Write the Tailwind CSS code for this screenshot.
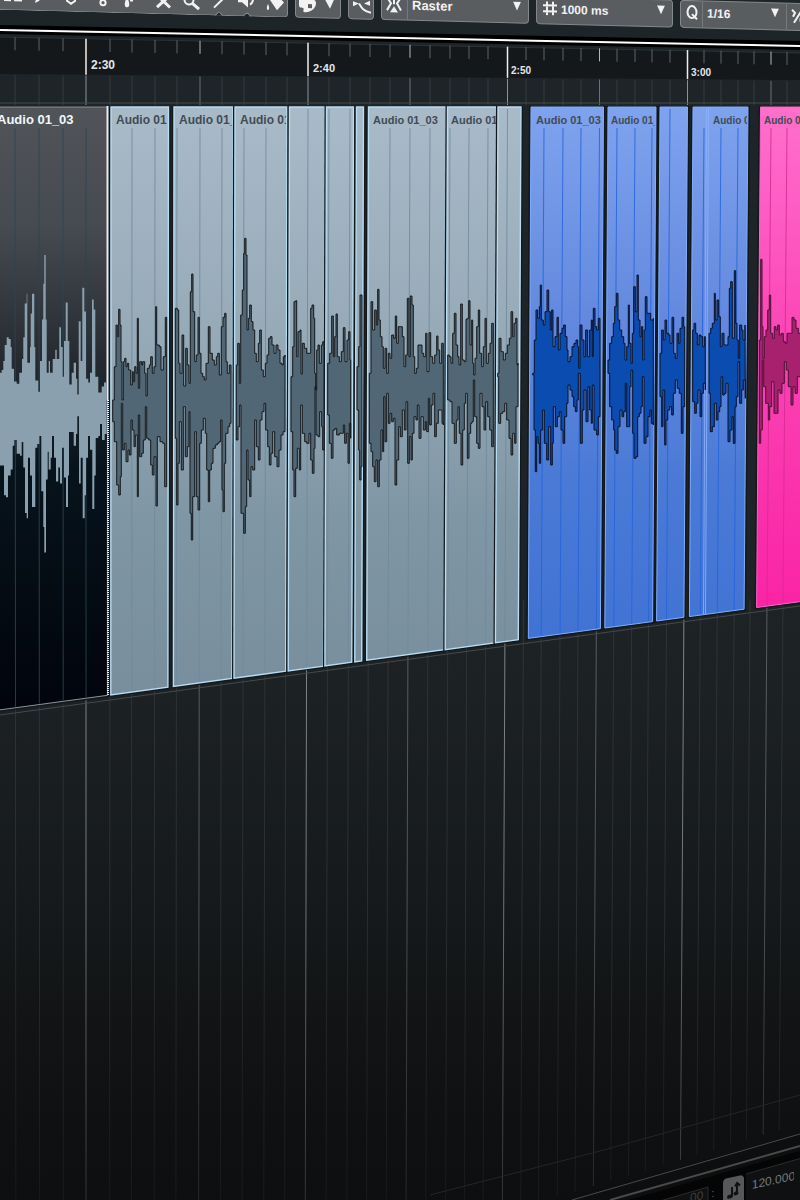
<!DOCTYPE html>
<html lang="en">
<head>
<meta charset="utf-8">
<meta name="viewport" content="width=device-width, initial-scale=1">
<title>Audio arrangement</title>
<script src="https://cdn.jsdelivr.net/npm/@tailwindcss/browser@4"></script>
</head>
<body class="bg-[#101112] font-['Liberation_Sans',Arial,sans-serif]">
<div class="relative overflow-hidden bg-[#1e2529]">

  <!-- Toolbar -->
  <header class="relative z-10 flex h-6 origin-top-left skew-y-[1.5deg] gap-[7px] font-bold text-[#f2f2f2]">
    <div class="relative -mt-[18px] flex h-7 w-[288px] shrink-0 rounded-br-sm border border-l-0 border-[#85888b] bg-[#5a5d60]">
      <button type="button" aria-label="Select" class="w-7"><svg class="h-7 w-7" viewBox="0 0 28 28"><path fill="#f2f2f2" d="M4 16h7v2H4zM14 16h8v2h-8z"/></svg></button>
      <button type="button" aria-label="Draw" class="w-7"><svg class="h-7 w-7" viewBox="0 0 28 28"><path fill="#f2f2f2" d="M9 11l6 0-4 6-4 2z"/></svg></button>
      <button type="button" aria-label="Erase" class="w-7"><svg class="h-7 w-7" viewBox="0 0 28 28"><path fill="none" stroke="#f2f2f2" stroke-width="2" d="M11 12v4l4 3 4-3v-4"/></svg></button>
      <button type="button" aria-label="Glue" class="w-7"><svg class="h-7 w-7" viewBox="0 0 28 28"><circle cx="19" cy="17" r="2.6" fill="none" stroke="#f2f2f2" stroke-width="2"/><path stroke="#f2f2f2" stroke-width="2" d="M19 8v6"/></svg></button>
      <button type="button" aria-label="Split" class="w-7"><svg class="h-7 w-7" viewBox="0 0 28 28"><path fill="#f2f2f2" d="M15 11c3 5 3 10 0 10s-3-5 0-10zM18 12h3v3h-3z"/></svg></button>
      <button type="button" aria-label="Mute" class="w-7"><svg class="h-7 w-7 overflow-visible" viewBox="0 0 28 28"><path stroke="#f2f2f2" stroke-width="3" d="M17 8l13 12M30 8L17 20"/></svg></button>
      <button type="button" aria-label="Zoom" class="w-7"><svg class="h-7 w-7 overflow-visible" viewBox="0 0 28 28"><circle cx="21" cy="12" r="4.5" fill="none" stroke="#f2f2f2" stroke-width="2"/><path stroke="#f2f2f2" stroke-width="3" d="M24 15l7 6"/></svg></button>
      <button type="button" aria-label="Line" class="w-7"><svg class="h-7 w-7 overflow-visible" viewBox="0 0 28 28"><path stroke="#f2f2f2" stroke-width="2" d="M27 10l-9 9"/></svg></button>
      <button type="button" aria-label="Play" class="w-7"><svg class="h-7 w-7 overflow-visible" viewBox="0 0 28 28"><path fill="#f2f2f2" d="M14 9h4l6-4v13l-6-5h-4z"/><path fill="none" stroke="#f2f2f2" stroke-width="2" d="M26 15c2-1 3-3 3-6"/></svg></button>
      <button type="button" aria-label="Color" class="w-7"><svg class="h-7 w-7 overflow-visible" viewBox="0 0 28 28"><path fill="#f2f2f2" d="M18 10l11-1 3 3-7 8zM16 14c2 4 1 6 0 6s-2-2 0-6z"/></svg></button>
      <svg class="absolute bottom-[-1px] left-[213px] h-1 w-10" viewBox="0 0 40 4"><path fill="#1e2529" stroke="#85888b" stroke-width="1" d="M2 4l4-4 4 4M30 4l4-4 4 4"/></svg>
    </div>
    <button type="button" aria-label="Colour palette" class="-mt-[18px] h-7 w-[46px] shrink-0 rounded-sm border border-[#85888b] bg-[#5a5d60]">
      <svg class="h-7 w-11 overflow-visible" viewBox="0 0 44 28"><path fill="#f2f2f2" fill-rule="evenodd" d="M3 9c1-4 17-4 17 3 0 6-7 10-12 9-2-1 1-3-1-4-2 0-4 0-4-3zm9 4v4h4v-4zM29 8h9l-4 9z"/></svg>
    </button>
    <button type="button" aria-label="Auto-crossfade" class="-mt-[18px] h-7 w-[26px] shrink-0 rounded-sm border border-[#85888b] bg-[#5a5d60]">
      <svg class="h-7 w-6" viewBox="0 0 24 28"><path fill="none" stroke="#f2f2f2" stroke-width="2" d="M12 7l4-3M10 11c3 5 5 8 12 9"/><path fill="#f2f2f2" d="M4 9l6 2-6 3zM21 8v5l-6-2z"/></svg>
    </button>
    <div class="-mt-[18px] flex h-7 w-[148px] shrink-0 items-center rounded-sm border border-[#85888b] bg-[#5a5d60]">
      <button type="button" aria-label="Snap" class="h-full w-[26px] border-r border-[#777a7d]"><svg class="h-6 w-6" viewBox="0 0 24 24"><path fill="none" stroke="#f2f2f2" stroke-width="2" d="M5 3l4 6-4 7M19 3l-4 6 4 7"/><path fill="#f2f2f2" d="M12 12l4 6H8zM11 4h2v4h-2zM11 7h2v3h-2z"/></svg></button>
      <div class="relative -mt-1 min-w-0 grow">
        <select aria-label="Snap type" class="w-full appearance-none bg-transparent pl-1 text-[13px] leading-5"><option>Raster</option></select>
        <svg class="pointer-events-none absolute right-1.5 top-1.5 h-2.5 w-2.5" viewBox="0 0 10 10"><path fill="#f2f2f2" d="M1 0h8L5 9z"/></svg>
      </div>
    </div>
    <div class="-mt-[18px] flex h-7 w-[137px] shrink-0 items-center rounded-sm border border-[#85888b] bg-[#5a5d60]">
      <svg class="-mt-1 ml-1.5 h-3.5 w-3.5 shrink-0" viewBox="0 0 14 14"><path fill="none" stroke="#f2f2f2" stroke-width="2" d="M4 0v14M10 0v14M0 4h14M0 10h14"/></svg>
      <div class="relative -mt-1 min-w-0 grow">
        <select aria-label="Grid type" class="w-full appearance-none bg-transparent pl-1 text-xs leading-5"><option>1000 ms</option></select>
        <svg class="pointer-events-none absolute right-1.5 top-1.5 h-2.5 w-2.5" viewBox="0 0 10 10"><path fill="#f2f2f2" d="M1 0h8L5 9z"/></svg>
      </div>
    </div>
    <div class="-mt-[18px] flex h-7 min-w-[128px] grow items-center rounded-l-sm border border-[#85888b] bg-[#5a5d60]">
      <div class="flex h-full w-[22px] shrink-0 items-center justify-center border-r border-[#777a7d]">
        <svg class="-mt-1 h-4 w-3.5" viewBox="0 0 14 16"><ellipse cx="7" cy="8" rx="4.5" ry="6" fill="none" stroke="#f2f2f2" stroke-width="2"/><path stroke="#f2f2f2" stroke-width="2" d="M7 10l5 5"/></svg>
      </div>
      <div class="relative -mt-1 w-[83px] shrink-0">
        <select aria-label="Quantize preset" class="w-full appearance-none bg-transparent pl-1 text-xs leading-5"><option>1/16</option></select>
        <svg class="pointer-events-none absolute right-1.5 top-1.5 h-2.5 w-2.5" viewBox="0 0 10 10"><path fill="#f2f2f2" d="M1 0h8L5 9z"/></svg>
      </div>
      <button type="button" aria-label="Iterative quantize" class="h-full border-l border-[#777a7d]"><svg class="h-6 w-5" viewBox="0 0 20 24"><path fill="none" stroke="#f2f2f2" stroke-width="2" d="M5 5l3 3-2 4M7 18L15 5"/><circle cx="16" cy="15" r="2.5" fill="none" stroke="#f2f2f2" stroke-width="2"/></svg></button>
    </div>
  </header>

  <!-- Ruler, tracks and clips -->
  <svg id="stage" class="block h-auto w-full overflow-visible" viewBox="0 24 800 1176" role="img" aria-label="Timeline with audio clips">
    <defs>
      <linearGradient id="bg" x1="0" y1="0" x2="0" y2="1"><stop offset="0" stop-color="#1e2529"/><stop offset=".55" stop-color="#1d2225"/><stop offset=".8" stop-color="#16191b"/><stop offset="1" stop-color="#0f1011"/></linearGradient>
      <linearGradient id="dark" x1="0" y1="105" x2="0" y2="710" gradientUnits="userSpaceOnUse"><stop offset="0" stop-color="#515459"/><stop offset=".2" stop-color="#464b51"/><stop offset=".4" stop-color="#292d34"/><stop offset=".6" stop-color="#07131b"/><stop offset="1" stop-color="#01040c"/></linearGradient>
      <linearGradient id="grey" x1="0" y1="105" x2="0" y2="695" gradientUnits="userSpaceOnUse"><stop offset="0" stop-color="#a9bbc8"/><stop offset=".4" stop-color="#96a9b7"/><stop offset=".7" stop-color="#7f96a5"/><stop offset="1" stop-color="#788e9d"/></linearGradient>
      <linearGradient id="blue" x1="0" y1="105" x2="0" y2="640" gradientUnits="userSpaceOnUse"><stop offset="0" stop-color="#7fa3ee"/><stop offset=".4" stop-color="#6389de"/><stop offset=".7" stop-color="#4a7ad6"/><stop offset="1" stop-color="#4173d4"/></linearGradient>
      <linearGradient id="pink" x1="0" y1="105" x2="0" y2="608" gradientUnits="userSpaceOnUse"><stop offset="0" stop-color="#ff70cc"/><stop offset=".5" stop-color="#fb42b4"/><stop offset="1" stop-color="#fa24a5"/></linearGradient>
      <linearGradient id="fade" x1="0" y1="600" x2="0" y2="1200" gradientUnits="userSpaceOnUse"><stop offset="0" stop-color="#0d0e0f" stop-opacity="0"/><stop offset=".5" stop-color="#0d0e0f" stop-opacity=".15"/><stop offset="1" stop-color="#0d0e0f" stop-opacity=".7"/></linearGradient>
    </defs>
    <rect y="76" width="800" height="1124" fill="url(#bg)"/>
    <path fill="#000" d="M0 25L800 41V50L0 34z"/>
    <path stroke="#fff" stroke-width="2" d="M0 30L800 46"/>
    <path fill="#14181b" d="M0 37L800 53V80L0 74z"/>
    <path stroke="#2c3337" d="M0 37L800 53"/>
    <g id="grid"></g>
    <path stroke="#44494b" fill="none" d="M0 715L800 606M0 103H800"/>
    <g id="clips"></g>
    <g id="waves"></g>
    <g id="labels" font-weight="700"></g>
    <g fill="#e4e7e8" font-weight="700">
      <text x="91" y="69" font-size="12">2:30</text>
      <text x="313" y="72" font-size="11">2:40</text>
      <text x="511" y="74" font-size="10">2:50</text>
      <text x="691" y="76" font-size="10">3:00</text>
    </g>
    <path fill="#0d0e0f" d="M560 1200L800 1134V1200z"/>
    <path fill="#050505" d="M600 1208L800 1151V1200z"/>
    <g fill="none">
      <path stroke="#242627" d="M430 1195L600 1151L800 1095"/>
      <path stroke="#484a4b" d="M572 1200L800 1134"/>
      <path stroke="#4a4a4a" stroke-width="2" d="M610 1200L800 1146"/>
    </g>
    <path fill="#0f1011" stroke="#2a2c2d" d="M650 1204L708 1187V1202M746 1174L802 1158V1202H746"/>
  </svg>

  <!-- Transport corner -->
  <footer class="absolute bottom-0 right-1.5 flex origin-bottom-right -skew-y-12 items-end text-xs text-[#77797b]">
    <span class="mr-2 mb-4 text-[#3c3e3f]">00</span>
    <span class="mr-2 mb-4 text-[#55585a]">:</span>
    <button type="button" aria-label="Tempo mode" class="mr-2 mb-2 h-[28px] w-[21px] rounded-t-sm bg-[#56585a]"><svg class="h-6 w-5" viewBox="0 0 20 24"><g fill="#101112"><ellipse cx="7" cy="17" rx="3" ry="2"/><ellipse cx="13" cy="15" rx="2.5" ry="2"/></g><path fill="none" stroke="#101112" stroke-width="2" d="M9 17V8M14 15V5M12 8l2-3 3 3"/></svg></button>
    <input aria-label="Tempo" value="120.000" class="mb-4 w-[42px] bg-transparent leading-4">
  </footer>
</div>

<script>
const NS = 'http://www.w3.org/2000/svg';
const add = (id, tag, attrs, text) => {
  const el = document.createElementNS(NS, tag);
  for (const k in attrs) el.setAttribute(k, attrs[k]);
  if (text) el.textContent = text;
  document.getElementById(id).appendChild(el);
  return el;
};
// Verticals lean slightly to the left further down the view.
const lean = (x, y) => (x - (x - 86) * 0.0000105 * (y - 50)).toFixed(1);
const floor = x => 695 - (x - 110) * 0.1345;

const ticks = [15,39,63,86,110,132,155,177,200,222,244,266,287,308,329,350,370,390,410,430,450,469,488,507.5,526,544,563,581,599.5,617,635,652,670,687.5,704,721,738,754,771,787];
const major = [86,308,507.5,687.5], mid = [200,410,599.5,771];
for (const x of ticks) {
  const M = major.includes(x), m = mid.includes(x), top = 37 + x * 0.019;
  const end = Math.min(1200, 1366 - x * 0.3);
  add('grid', 'path', {d: `M${x} ${top}V${M ? 74 + x * 0.0075 : top + 13}`, stroke: M ? '#f3ece8' : m ? '#b5b9bb' : '#5d6366', 'stroke-width': M ? 1.5 : 1});
  add('grid', 'path', {d: `M${x} ${75 + x * 0.0075}V105`, stroke: M ? '#8d9295' : m ? '#6b7174' : '#353c40'});
  add('grid', 'path', {d: `M${lean(x, 600)} 600L${lean(x, end)} ${end}`, stroke: M ? '#83888a' : m ? '#5a6062' : '#2f3538'});
}
add('grid', 'rect', {y: 600, width: 800, height: 600, fill: 'url(#fade)'});

const pal = {
  dark: {line: '#2b4555', edge: '#8d9296', wave: '#8ba0af', out: '#8ba0af'},
  grey: {line: '#6f8b9d', edge: '#b9dcf2', wave: '#526776', out: '#14191c'},
  blue: {line: '#2464dc', edge: '#80aeff', wave: '#0a4cb0', out: '#0a1226'},
  pink: {line: '#d82a92', edge: '#ff62cf', wave: '#a8216f', out: '#4a1236'}
};
const clips = [
  ['dark',-4,107.5,'Audio 01_03',-3,13,'#f4f7f9'],
  ['grey',111,168.5,'Audio 01',116,12],['grey',174,233,'Audio 01_',179,12],['grey',235,287,'Audio 01',240,12],
  ['grey',289.5,325],['grey',326.5,353.5],['grey',356.5,363.5],
  ['grey',368.5,446.5,'Audio 01_03',373,11],['grey',447.5,497,'Audio 01',451,11],['grey',498,521],
  ['blue',531,603.5,'Audio 01_03',536,11],['blue',608,656,'Audio 01_',611,10],['blue',660,687.5],['blue',693,748,'Audio 01',713,10],
  ['pink',760.5,806,'Audio 01_',764,10]
];
clips.forEach(([k, a, b, label, lx, size, color], i) => {
  const p = pal[k], ya = floor(a), yb = floor(b);
  const d = `M${a} 107H${b}L${lean(b, yb)} ${yb}L${lean(a, ya)} ${ya}z`;
  const back = `M${a - 2} 106H${b + 2}L${lean(b + 2, yb)} ${yb + 2}L${lean(a - 2, ya)} ${ya + 2}z`;
  add('clips', 'path', {d: back, fill: '#12181c'});
  add('clips', 'path', {d, fill: `url(#${k})`, stroke: p.edge, 'stroke-width': k === 'grey' ? 1.4 : 1});
  for (const x of ticks) if (x > a + 2 && x < b - 2) {
    const y = floor(x) - 1;
    add('clips', 'path', {d: `M${x} ${label ? 128 : 109}L${lean(x, y)} ${y}`, stroke: p.line, 'stroke-opacity': .85});
  }
  if (label) {
    const c = add('clips', 'clipPath', {id: 'c' + i});
    const r = document.createElementNS(NS, 'path');
    r.setAttribute('d', `M${a} 107H${b - 1}V140H${a}z`);
    c.appendChild(r);
    add('labels', 'text', {x: lx, y: 124, 'font-size': size, fill: color || '#414b54', 'clip-path': `url(#c${i})`}, label);
  }
});
add('clips', 'path', {d: 'M706.5 108L703.5 614M708.5 108L705.5 614', stroke: '#8fb4ff', 'stroke-opacity': .8});
add('clips', 'path', {d: 'M107.5 106V400', stroke: '#e9edef', 'stroke-width': 2});
add('clips', 'path', {d: 'M108 400V696', stroke: '#e9edef', 'stroke-width': 2, 'stroke-dasharray': '1 1'});

// Envelope samples: colour, origin x, origin y, vertical samples per pixel, upper edge, lower edge.
const waves = [
['dark',0,100,2.53,'0,690 5,683 10,660 14,620 20,600 26,605 32,625 35,680 42,712 50,718 58,690 66,655 70,600 74,515 80,490 82,665 90,625 92,540 96,490 103,625 106,710 115,738 120,660 126,555 130,465 133,392 137,555 140,690 146,660 150,690 158,655 166,632 170,655 178,575 183,625 188,700 192,610 197,512 203,610 208,720 215,690 221,665 228,705 232,745 236,560 242,660 247,475 253,535 258,705 265,715 270,690 276,505 281,530 286,700 295,740 305,725 312,715 320,725',
'0,925 8,925 12,1000 18,1005 24,950 32,935 38,875 43,860 50,895 60,900 65,865 70,930 75,1045 80,1058 84,905 90,950 96,1030 103,1030 106,880 112,870 118,850 124,990 130,1080 133,1145 138,960 143,890 146,935 152,905 156,850 162,905 168,965 175,930 180,970 186,880 192,955 198,1030 204,950 207,840 214,840 221,875 228,845 232,800 237,970 242,905 248,1058 254,1000 258,905 264,850 270,885 277,1035 283,950 287,855 295,850 300,820 306,860 314,845 320,835'],
['grey',100,230,3,'38,510 43,410 48,285 52,320 56,238 60,285 63,395 66,510 70,395 74,385 78,410 82,400 86,420 92,465 97,425 100,455 104,410 108,430 112,265 115,475 119,395 125,405 128,395 134,430 138,498 142,415 148,405 152,380 157,430 162,410 167,230 170,345 178,350 183,420 190,380 196,262 200,275',
'38,575 43,635 50,765 56,795 61,740 64,520 68,660 73,640 78,695 84,660 88,675 93,570 97,600 102,650 106,615 112,800 115,555 119,680 125,670 130,630 136,530 140,625 146,630 152,705 157,735 162,680 168,828 172,620 180,635 188,640 194,770 200,690'],
['grey',100,230,3,'226,235 232,240 236,400 240,430 246,315 251,468 257,355 262,405 267,460 271,185 275,132 279,245 284,395 289,375 294,262 298,370 303,430 308,440 313,450 318,400 325,290 330,370 337,390 343,405 349,380 353,370 358,435 364,290 369,262 374,250 378,395 382,430 388,405 393,460',
'226,625 230,825 234,700 238,575 244,720 250,530 256,680 262,650 267,545 270,850 274,930 278,800 284,605 289,800 294,840 299,640 304,600 310,565 316,610 320,720 325,815 329,720 334,700 339,655 346,645 352,640 357,635 362,570 366,780 369,845 373,700 377,610 384,590 389,580 393,555'],
['grey',100,230,3,'409,405 413,340 418,460 422,255 427,180 431,70 434,25 438,75 441,300 445,265 449,225 454,275 459,300 464,370 469,395 475,340 479,300 484,420 490,440 496,400 501,375 506,325 511,320 516,345 522,370 528,345 534,360 540,400 546,405 550,380 555,375',
'409,630 414,590 419,525 423,850 427,850 431,910 436,830 440,660 444,750 449,800 453,710 458,720 464,570 469,650 475,690 480,570 486,545 492,520 497,600 503,650 508,705 513,670 518,605 524,680 531,710 537,660 543,615 549,605 555,600'],
['grey',280,230,3,'33,440 38,350 42,215 47,212 50,380 54,305 60,300 63,432 67,340 73,355 80,370 87,370 92,235 96,225 101,265 104,430 107,480 110,360 114,345 118,400 124,345 128,335 132,400',
'33,605 38,720 42,800 47,715 52,655 58,720 62,525 67,610 74,635 80,640 87,610 92,690 97,730 102,655 105,470 108,615 114,620 119,545 125,590 128,660 132,590'],
['grey',280,230,3,'143,400 149,370 155,258 160,380 164,320 168,252 172,380 178,395 184,365 190,293 195,395 201,330 206,305 210,390 212,395',
'143,555 148,640 154,685 159,600 165,595 170,615 178,610 185,610 190,585 194,640 199,610 204,700 208,580 212,625'],
['grey',280,230,3,'231,410 236,350 240,195 246,240','231,540 236,660 239,750 243,710 246,600'],
['grey',280,230,3,'268,430 273,215 278,300 284,240 289,285 293,178 297,270 301,320 306,350 310,415 315,355 320,430 325,370 330,385 335,315 341,325 346,258 350,340 355,290 362,290 367,320 372,410 377,375 382,205 387,380 391,198 396,225 400,380 404,430 409,415 414,345 420,345 426,370 431,380 437,310 441,425 447,308 452,380 458,400 464,375 470,318 474,360 479,400 485,340 490,345',
'268,640 273,665 278,710 283,755 288,690 293,770 298,690 303,600 308,665 311,500 315,635 320,490 325,580 330,550 335,575 340,565 345,765 350,690 356,590 361,620 367,540 373,600 378,515 383,700 388,620 393,690 397,610 402,560 408,570 412,525 417,625 423,560 430,600 436,575 440,605 445,505 449,585 454,525 459,490 464,620 469,580 475,540 481,540 486,580 490,585'],
['grey',280,230,3,'503,375 508,380 513,400 518,310 523,250 528,345 533,380 537,405 542,222 547,390 553,395 558,268 562,265 566,212 570,345 575,270 578,400 581,435 585,385 590,290 595,240 599,370 605,410 610,350 615,265 619,400 625,370 630,340 635,280 640,300',
'503,510 510,515 516,580 523,640 529,570 534,530 538,610 543,705 548,600 553,520 557,490 562,685 567,610 572,580 576,575 580,450 584,560 590,640 595,655 600,490 606,530 612,600 617,515 623,560 629,600 635,650 640,580'],
['grey',280,230,3,'653,430 657,325 663,365 670,390 676,370 682,345 688,325 693,245 698,320 702,280 707,265 711,405 714,400',
'653,440 656,580 662,550 668,545 674,520 680,570 687,625 693,675 698,610 704,640 708,530 714,490'],
['blue',520,230,3,'38,430 43,330 48,240 53,265 58,230 61,165 64,270 70,285 75,245 81,180 86,245 91,300 95,240 99,350 105,320 111,262 115,360 120,310 126,295 131,285 136,320 141,360 144,395 150,380 156,350 162,340 168,330 173,350 176,415 180,285 186,330 192,380 197,300 203,380 209,300 214,270 217,380 220,235 225,290 230,300 235,265 240,280',
'38,435 42,600 46,725 50,620 54,640 58,700 62,600 68,540 73,640 80,690 86,590 92,705 97,640 100,530 106,590 112,560 118,545 123,600 129,640 134,560 140,520 144,465 150,480 156,500 161,530 166,545 171,510 175,430 181,640 187,540 192,480 198,575 204,470 209,540 214,580 217,465 222,600 230,615 235,560 240,520'],
['blue',520,230,3,'264,390 269,340 275,320 280,280 284,230 289,190 294,270 299,300 305,320 311,340 315,390 320,350 325,225 328,340 333,400 337,310 341,170 346,245 351,135 355,270 360,320 364,290 368,390 372,300 376,200 381,250 387,250 392,270 400,265',
'264,430 269,530 275,570 281,600 284,660 289,670 294,590 300,540 306,560 311,545 316,460 320,590 325,590 329,470 333,420 338,610 342,685 348,680 353,560 358,550 363,530 367,440 372,640 378,620 384,560 390,540 394,580 400,585'],
['blue',520,230,3,'420,370 425,300 430,330 435,270 440,310 446,315 450,340 456,262 461,370 466,385 471,310 476,340 480,295 486,262 491,290 494,320',
'420,500 425,590 429,480 434,645 438,570 443,540 449,530 455,555 460,490 466,450 472,475 478,490 484,610 489,530 494,515'],
['blue',520,230,3,'518,300 522,280 527,310 532,345 537,315 543,320 548,350 553,320 556,345','518,515 524,550 529,520 534,480 540,560 545,490 550,460 556,480'],
['blue',520,230,3,'567,310 572,295 577,280 583,190 586,270 591,210 596,260 601,350 606,310 612,345 619,345 624,320 628,175 632,155 637,325 643,122 647,280 651,330 655,385 659,285 665,300 669,330 675,285',
'567,490 571,605 577,590 583,520 589,570 594,545 599,530 603,440 608,495 613,490 618,460 624,635 630,600 636,560 640,640 645,530 649,500 654,395 659,520 665,480 670,450 676,505'],
['pink',520,230,3,'718,330 722,88 726,290 729,385 733,320 738,300 743,240 748,195 752,310 758,325 763,290 768,300 773,285 778,315 784,310 790,335 796,340 801,310 808,310 816,262 822,270 828,295 835,310 846,310',
'718,640 722,600 727,390 731,470 737,520 745,570 749,530 755,455 762,550 769,550 774,480 780,490 786,460 793,395 799,420 805,470 813,525 819,470 825,490 832,440 846,460']
];
for (const [k, ox, oy, s, up, low] of waves) {
  const read = t => t.split(' ').map(q => { const [x, y] = q.split(',').map(Number); return [(ox + x / 3).toFixed(1), (oy + y / s).toFixed(1)]; });
  const u = read(up), l = read(low).reverse();
  let d = `M${u[0][0]} ${u[0][1]}`;
  for (const [x, y] of u.slice(1)) d += `H${x}V${y}`;
  d += `L${l[0][0]} ${l[0][1]}`;
  for (const [x, y] of l.slice(1)) d += `V${y}H${x}`;
  add('waves', 'path', {d: d + 'z', fill: pal[k].wave, stroke: pal[k].out, 'stroke-width': k === 'dark' ? 0 : 1});
}
</script>
</body>
</html>
